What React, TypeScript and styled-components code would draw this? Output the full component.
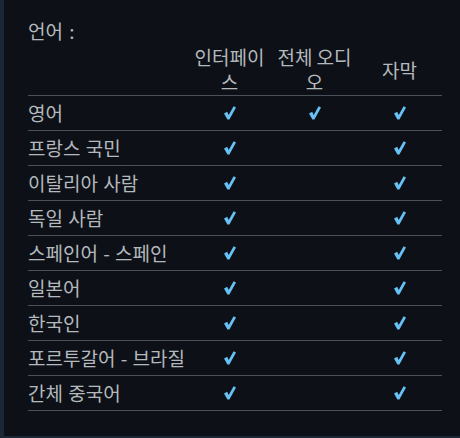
import styled, { createGlobalStyle } from 'styled-components';

const GlobalStyle = createGlobalStyle`
	html, body {
		margin: 0;
		padding: 0;
		background: #0d1117;
	}
`;

interface Language {
	name: string;
	ui: boolean;
	audio: boolean;
	subs: boolean;
}

const languages: Language[] = [
	{ name: '영어', ui: true, audio: true, subs: true },
	{ name: '프랑스 국민', ui: true, audio: false, subs: true },
	{ name: '이탈리아 사람', ui: true, audio: false, subs: true },
	{ name: '독일 사람', ui: true, audio: false, subs: true },
	{ name: '스페인어 - 스페인', ui: true, audio: false, subs: true },
	{ name: '일본어', ui: true, audio: false, subs: true },
	{ name: '한국인', ui: true, audio: false, subs: true },
	{ name: '포르투갈어 - 브라질', ui: true, audio: false, subs: true },
	{ name: '간체 중국어', ui: true, audio: false, subs: true },
];

function Check() {
	return (
		<svg width="12" height="14" viewBox="0 0 12 14">
			<path
				d="M0 7.4 L3.2 5.8 L4.7 9 L9.6 0.2 L12 1.6 L5.4 13.6 L3.4 13.6 Z"
				fill="#67c1f5"
			/>
		</svg>
	);
}

export default function App() {
	return (
		<>
			<GlobalStyle />
			<Page>
				<Title>언어 :</Title>
				<Table>
					<colgroup>
						<col style={{ width: 159 }} />
						<col style={{ width: 85 }} />
						<col style={{ width: 85 }} />
						<col style={{ width: 85 }} />
					</colgroup>
					<thead>
						<tr>
							<HeadCell />
							<HeadCell>인터페이스</HeadCell>
							<HeadCell>전체 오디오</HeadCell>
							<HeadCell>자막</HeadCell>
						</tr>
					</thead>
					<tbody>
						{languages.map((lang) => (
							<Row key={lang.name}>
								<NameCell>{lang.name}</NameCell>
								<CheckCell>{lang.ui && <Check />}</CheckCell>
								<CheckCell>{lang.audio && <Check />}</CheckCell>
								<CheckCell>{lang.subs && <Check />}</CheckCell>
							</Row>
						))}
					</tbody>
				</Table>
			</Page>
		</>
	);
}

const Page = styled.div`
	box-sizing: border-box;
	height: 438px;
	padding: 18px 18px 0 24px;
	border-left: 4px solid #1c2735;
	border-bottom: 2px solid #1c2735;
	font-family: 'Noto Sans CJK KR', 'Noto Sans', sans-serif;
	font-size: 19px;
	color: #b4b9be;
`;

const Title = styled.div`
	line-height: 26px;
	height: 26px;
	word-spacing: 2px;
`;

const Table = styled.table`
	width: 414px;
	table-layout: fixed;
	border-collapse: collapse;
	border-spacing: 0;
`;

const HeadCell = styled.th`
	font-weight: normal;
	text-align: center;
	vertical-align: middle;
	line-height: 25px;
	padding: 0 1px 1px;
	border-bottom: 1px solid #4b5058;
`;

const Row = styled.tr`
	height: 35px;
	border-bottom: 1px solid #4b5058;
`;

const NameCell = styled.td`
	padding: 0;
	line-height: 24px;
	white-space: nowrap;
	word-spacing: 1px;
	vertical-align: middle;
`;

const CheckCell = styled.td`
	padding: 0;
	text-align: center;
	vertical-align: middle;
	line-height: 0;
`;
